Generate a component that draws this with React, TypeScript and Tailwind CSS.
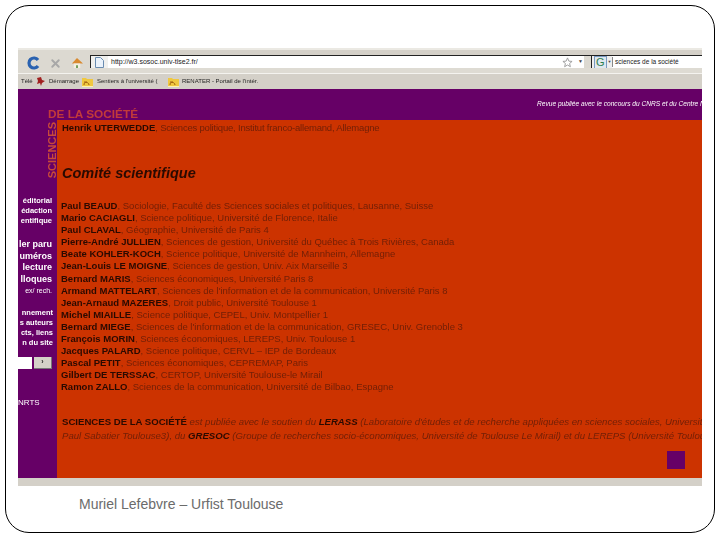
import { X } from "lucide-react";

const membres = [
  ["Paul BEAUD", ", Sociologie, Faculté des Sciences sociales et politiques, Lausanne, Suisse"],
  ["Mario CACIAGLI", ", Science politique, Université de Florence, Italie"],
  ["Paul CLAVAL", ", Géographie, Université de Paris 4"],
  ["Pierre-André JULLIEN", ", Sciences de gestion, Université du Québec à Trois Rivières, Canada"],
  ["Beate KOHLER-KOCH", ", Science politique, Université de Mannheim, Allemagne"],
  ["Jean-Louis LE MOIGNE", ", Sciences de gestion, Univ. Aix Marseille 3"],
  ["Bernard MARIS", ", Sciences économiques, Université Paris 8"],
  ["Armand MATTELART", ", Sciences de l'information et de la communication, Université Paris 8"],
  ["Jean-Arnaud MAZERES", ", Droit public, Université Toulouse 1"],
  ["Michel MIAILLE", ", Science politique, CEPEL, Univ. Montpellier 1"],
  ["Bernard MIEGE", ", Sciences de l'information et de la communication, GRESEC, Univ. Grenoble 3"],
  ["François MORIN", ", Sciences économiques, LEREPS, Univ. Toulouse 1"],
  ["Jacques PALARD", ", Science politique, CERVL – IEP de Bordeaux"],
  ["Pascal PETIT", ", Sciences économiques, CEPREMAP, Paris"],
  ["Gilbert DE TERSSAC", ", CERTOP, Université Toulouse-le Mirail"],
  ["Ramon ZALLO", ", Sciences de la communication, Université de Bilbao, Espagne"],
];

function FolderIcon() {
  return (
    <svg width="11" height="10" viewBox="0 0 11 10" className="shrink-0">
      <path d="M0 1h4l1 1h6v8H0z" fill="#f0c840" />
      <path d="M2 8c0-2 1-3 3-3M2 5c3 0 5 1 5 3" stroke="#a06010" fill="none" />
      <path d="M0 9h11v1H0z" fill="#fff2b0" />
    </svg>
  );
}

function Toolbar() {
  return (
    <div className="h-[25px] shrink-0 bg-[#dcd9d1] border-t-2 border-[#ebe9e3] flex">
      <div className="w-[72px] shrink-0 flex items-center pl-[9px] pt-[3px] gap-[9px]">
        <svg width="13" height="14" viewBox="0 0 13 14">
          <path d="M11 4A5 5 0 1 0 11 10" stroke="#2a62b0" strokeWidth="3.2" fill="none" />
        </svg>
        <X size={13} strokeWidth={3.5} color="#a8a8a8" />
        <svg width="12" height="12" viewBox="0 0 13 13">
          <path d="M6.5 1 13 7H1z" fill="#d98a30" />
          <path d="M3 7h7v5H3z" fill="#f4efe0" />
          <path d="M5.5 9h2v3h-2z" fill="#6a9a50" />
        </svg>
      </div>
      <div className="flex-1 flex flex-col">
        <div className="h-[5px] bg-[#d4d0c8]" />
        <div className="h-[13px] bg-white border-t border-[#222] flex items-center">
          <div className="w-[18px] h-full bg-[#f0f0ee] border-l border-[#222] flex items-center justify-center">
            <svg width="9" height="11" viewBox="0 0 9 11">
              <path d="M.5.5h5l3 3v7h-8z" fill="#eaf2fb" stroke="#6a8cb0" />
            </svg>
          </div>
          <span className="ml-[3px] text-[7px] text-[#222] flex-1">http://w3.sosoc.univ-tlse2.fr/</span>
          <svg width="11" height="11" viewBox="0 0 24 24" className="mr-[5px]">
            <path d="M12 2l3 7 7 .6-5.4 4.6 1.7 7-6.3-3.8L5.7 21.2l1.7-7L2 9.6 9 9z" fill="none" stroke="#999" strokeWidth="2" />
          </svg>
          <span className="text-[5px] text-[#444] mr-[1px]">▼</span>
          <div className="w-[7px] h-full bg-[#dcd9d1]" />
          <div className="h-full w-[21px] bg-[#eee] border-l border-[#222] flex items-center gap-[1px] pl-[2px]">
            <span className="text-[11px] leading-none text-[#2e7d4f] border border-[#7a9ac0] px-[1px] bg-[#dfe8ef]">G</span>
            <span className="text-[4px] text-[#444]">▼</span>
          </div>
          <span className="w-[90px] shrink-0 pl-[2px] text-[6.5px] text-[#222] border-l border-[#888] overflow-hidden whitespace-nowrap">sciences de la société</span>
        </div>
        <div className="flex-1 bg-[#dedbd3]" />
      </div>
    </div>
  );
}

function Bookmarks() {
  return (
    <div className="h-[16px] shrink-0 bg-[#d4d0c8] border-t border-[#f4f3ef] flex items-center text-[6px] text-[#222] whitespace-nowrap">
      <span className="ml-[3px] w-[12px]">Télé</span>
      <svg width="11" height="11" viewBox="0 0 11 11" className="ml-[2px]">
        <path d="M2 2l4-1 1 3 3 1-3 2-1 3-1-3-3 1 1-3z" fill="#a02020" />
      </svg>
      <span className="ml-[3px] w-[33px]">Démarrage</span>
      <FolderIcon />
      <span className="ml-[4px] w-[71px]">Sentiers à l'université (</span>
      <FolderIcon />
      <span className="ml-[3px]">RENATER - Portail de l'intér.</span>
    </div>
  );
}

function Sidebar() {
  return (
    <div className="w-[39px] shrink-0 bg-[#660066] flex flex-col items-end text-white text-[7.5px] leading-[10px] font-bold whitespace-nowrap overflow-hidden">
      <div className="mt-[76px] flex flex-col items-end pr-[5px]">
        <span>éditorial</span>
        <span>édaction</span>
        <span>entifique</span>
      </div>
      <div className="mt-[13px] flex flex-col items-end pr-[5px] text-[9px] leading-[11.5px]">
        <span>ler paru</span>
        <span>uméros</span>
        <span>lecture</span>
        <span>lloques</span>
        <span className="text-[7px] font-normal">ex/ rech.</span>
      </div>
      <div className="mt-[11px] flex flex-col items-end pr-[4px] text-[7.5px]">
        <span>nnement</span>
        <span>s auteurs</span>
        <span>cts, liens</span>
        <span>n du site</span>
      </div>
      <div className="mt-[9px] w-full flex gap-[2px] items-center">
        <div className="w-[14px] h-[12px] bg-white" />
        <div className="w-[18px] h-[12px] bg-[#d4d0c8] text-[#222] flex items-center justify-center text-[7px] border-r border-b border-[#777]">›</div>
      </div>
      <span className="mt-[29px] mr-auto text-[8px] font-normal">NRTS</span>
    </div>
  );
}

function Contenu() {
  return (
    <div className="flex-1 min-w-0 bg-[#cc3300] flex flex-col overflow-hidden text-[#701f06] whitespace-nowrap">
      <div className="pt-[2px] pl-[5px] text-[9.5px] leading-[12px] tracking-[-0.2px]">
        <b className="text-[#2a0a00] tracking-normal">Henrik UTERWEDDE</b>, Sciences politique, Institut franco-allemand, Allemagne
      </div>
      <div className="mt-[30px] pl-[5px] text-[14.5px] leading-[18px] italic font-bold text-[#2a0a00]">Comité scientifique</div>
      <div className="mt-[18px] pl-[4px] flex flex-col text-[9.5px] leading-[12.1px]">
        {membres.map(([nom, reste]) => (
          <div key={nom}>
            <b className="text-[#2a0a00]">{nom}</b>
            {reste}
          </div>
        ))}
      </div>
      <div className="mt-[21px] pl-[5px] flex flex-col text-[9.6px] leading-[14px] italic">
        <div>
          <b className="not-italic text-[#2a0a00]">SCIENCES DE LA SOCIÉTÉ</b> est publiée avec le soutien du <b className="text-[#2a0a00]">LERASS</b> (Laboratoire d'études et de recherche appliquées en sciences sociales, Université
        </div>
        <div>
          Paul Sabatier Toulouse3), du <b className="text-[#2a0a00]">GRESOC</b> (Groupe de recherches socio-économiques, Université de Toulouse Le Mirail) et du LEREPS (Université Toulouse
        </div>
      </div>
      <div className="mt-auto mb-[9px] mr-[17px] self-end w-[18px] h-[18px] bg-[#660066]" />
    </div>
  );
}

export default function App() {
  return (
    <div className="w-[720px] h-[540px] bg-white overflow-hidden pt-[5px] pl-[5px] font-['Liberation_Sans',sans-serif]">
      <div className="w-[710px] h-[528px] rounded-[24px] border border-black pt-[42px] pl-[12px] flex flex-col">
        <div className="w-[684px] h-[438px] shrink-0 flex flex-col blur-[0.3px]">
          <Toolbar />
          <Bookmarks />
          <div className="h-[31px] shrink-0 bg-[#660066] overflow-hidden relative">
            <span className="absolute left-[519px] top-[10px] text-[6.6px] italic text-white whitespace-nowrap">Revue publiée avec le concours du CNRS et du Centre National du Livre</span>
            <span className="absolute left-[30px] bottom-0 text-[11.8px] leading-[11px] font-bold text-[#c23a3a] whitespace-nowrap">DE LA SOCIÉTÉ</span>
          </div>
          <div className="flex-1 min-h-0 flex relative">
            <Sidebar />
            <Contenu />
            <span className="absolute left-[30px] top-[2px] text-[11px] leading-[9px] font-bold text-[#c84a3a] [writing-mode:vertical-rl] rotate-180 whitespace-nowrap">SCIENCES</span>
          </div>
          <div className="h-[8px] shrink-0 bg-[#d4d0c8]" />
        </div>
        <div className="mt-[10px] pl-[61px] text-[14px] leading-[16px] text-[#6b6b6b]">Muriel Lefebvre – Urfist Toulouse</div>
      </div>
    </div>
  );
}
